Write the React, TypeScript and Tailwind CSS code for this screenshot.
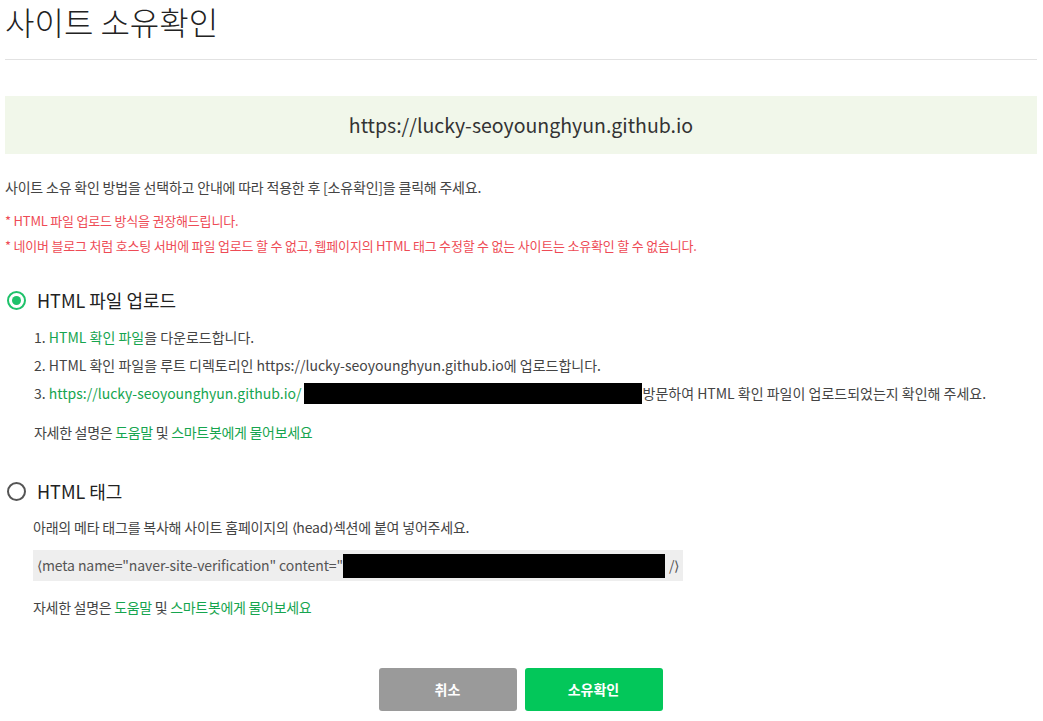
import React from 'react';

const font = { fontFamily: '"Noto Sans CJK KR", "Noto Sans", sans-serif' };

const Radio: React.FC<{ checked?: boolean }> = ({ checked }) => (
  <span
    className={`flex h-[19px] w-[19px] items-center justify-center rounded-full border-2 ${
      checked ? 'border-[#1ec26a]' : 'border-[#555]'
    }`}
  >
    {checked && <span className="h-[9px] w-[9px] rounded-full bg-[#1ec26a]" />}
  </span>
);

const HelpLine: React.FC = () => (
  <p className="text-[14px] leading-[21px] tracking-[-0.3px] text-[#444]">
    자세한 설명은 <span className="text-[#16a54f]">도움말</span> 및{' '}
    <span className="text-[#16a54f]">스마트봇에게 물어보세요</span>
  </p>
);

const App: React.FC = () => {
  return (
    <div className="min-h-[721px] w-[1043px] bg-white px-[5px] text-[#333]" style={font}>
      <h1 className="pt-[2px] text-[32px] font-light leading-[38px] text-[#222]">사이트 소유확인</h1>
      <div className="mt-[19px] mr-[1px] h-px bg-[#e2e2e2]" />

      <div className="mt-[36px] mr-[1px] flex h-[58px] items-center justify-center bg-[#f1f7ea]">
        <span className="text-[19.5px] text-[#333]">https://lucky-seoyounghyun.github.io</span>
      </div>

      <p className="mt-[23px] text-[14px] tracking-[-0.2px] text-[#444]">
        사이트 소유 확인 방법을 선택하고 안내에 따라 적용한 후 [소유확인]을 클릭해 주세요.
      </p>
      <div className="mt-[13px] flex flex-col gap-[6px] text-[13px] leading-[19px] tracking-[-0.2px] text-[#ee4b55]">
        <p>* HTML 파일 업로드 방식을 권장해드립니다.</p>
        <p>* 네이버 블로그 처럼 호스팅 서버에 파일 업로드 할 수 없고, 웹페이지의 HTML 태그 수정할 수 없는 사이트는 소유확인 할 수 없습니다.</p>
      </div>

      <section className="mt-[32px]">
        <div className="flex items-center gap-[11px] pl-[2px]">
          <Radio checked />
          <span className="text-[18px] text-[#222]">HTML 파일 업로드</span>
        </div>
        <div className="mt-[13px] flex flex-col gap-[7px] pl-[29px] text-[14px] leading-[21px] text-[#444]">
          <p>
            1. <span className="text-[#16a54f]">HTML 확인 파일</span>을 다운로드합니다.
          </p>
          <p>2. HTML 확인 파일을 루트 디렉토리인 https://lucky-seoyounghyun.github.io에 업로드합니다.</p>
          <p className="flex items-center">
            <span>3.&nbsp;</span>
            <span className="text-[#16a54f]">https://lucky-seoyounghyun.github.io/</span>
            <span className="ml-[2px] inline-block h-[21px] w-[338px] bg-black" />
            <span className="ml-[1px]">방문하여 HTML 확인 파일이 업로드되었는지 확인해 주세요.</span>
          </p>
        </div>
        <div className="mt-[18px] pl-[29px]">
          <HelpLine />
        </div>
      </section>

      <section className="mt-[35px]">
        <div className="flex items-center gap-[11px] pl-[2px]">
          <Radio />
          <span className="text-[18px] text-[#222]">HTML 태그</span>
        </div>
        <div className="mt-[12px] pl-[28px]">
          <p className="text-[14px] leading-[21px] tracking-[-0.2px] text-[#444]">
            아래의 메타 태그를 복사해 사이트 홈페이지의 ⟨head⟩섹션에 붙여 넣어주세요.
          </p>
          <div className="mt-[12px] flex h-[31px] w-[650px] items-center bg-[#eeeeee] pl-[4px] text-[14px] tracking-[-0.1px] text-[#555]">
            <span>⟨meta name="naver-site-verification" content="</span>
            <span className="inline-block h-[24px] w-[322px] bg-black" />
            <span className="ml-[4px]">/⟩</span>
          </div>
          <div className="mt-[16px]">
            <HelpLine />
          </div>
        </div>
      </section>

      <div className="mt-[50px] flex justify-center gap-[8px] pr-[2px]">
        <button className="h-[43px] w-[138px] rounded-[3px] bg-[#9a9a9a] text-[14px] font-bold text-white">
          취소
        </button>
        <button className="h-[43px] w-[138px] rounded-[3px] bg-[#03c75a] text-[14px] font-bold text-white">
          소유확인
        </button>
      </div>
    </div>
  );
};

export default App;
